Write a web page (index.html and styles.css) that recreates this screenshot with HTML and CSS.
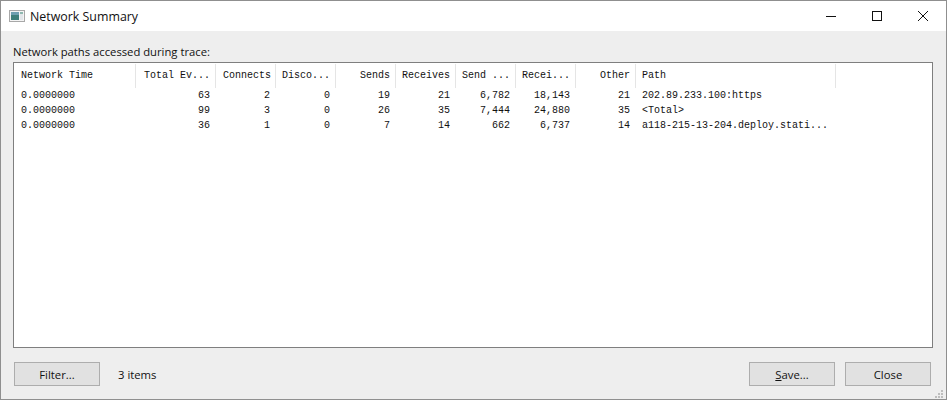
FILE: index.html
```html
<!DOCTYPE html>
<html lang="en">
<head>
<meta charset="utf-8">
<title>Network Summary</title>
<link rel="stylesheet" href="styles.css">
</head>
<body>
<div class="window">
  <header class="titlebar">
    <svg class="app-icon" width="16" height="12" viewBox="0 0 16 12">
      <rect x="0.5" y="0.5" width="15" height="11" fill="#f4f4f4" stroke="#a8a8a8"/>
      <rect x="2" y="2" width="8" height="8" fill="#3f7f7a"/>
      <rect x="2" y="2" width="8" height="3" fill="#6f9fb0"/>
      <rect x="11" y="2" width="3" height="2" fill="#8fb8b0"/>
      <rect x="11" y="4" width="3" height="6" fill="#e2e6ea"/>
    </svg>
    <span class="title">Network Summary</span>
    <div class="controls">
      <svg class="ctl" width="46" height="30" viewBox="0 0 46 30"><path d="M18 15.5h10" stroke="#111" fill="none"/></svg>
      <svg class="ctl" width="46" height="30" viewBox="0 0 46 30"><rect x="18.5" y="10.5" width="9" height="9" stroke="#111" fill="none"/></svg>
      <svg class="ctl" width="46" height="30" viewBox="0 0 46 30"><path d="M18 10l10 10M28 10l-10 10" stroke="#111" fill="none"/></svg>
    </div>
  </header>
  <main class="body">
    <div class="caption">Network paths accessed during trace:</div>
    <div class="list">
      <div class="row head">
        <span class="c0">Network Time</span><span class="c1 r">Total Ev...</span><span class="c2 r">Connects</span><span class="c3 l">Disco...</span><span class="c2 r">Sends</span><span class="c2 l">Receives</span><span class="c2 l">Send ...</span><span class="c2 l">Recei...</span><span class="c4 r">Other</span><span class="c5">Path</span>
      </div>
      <div class="rows">
        <div class="row">
          <span class="c0">0.0000000</span><span class="c1 r">63</span><span class="c2 r">2</span><span class="c3 r">0</span><span class="c2 r">19</span><span class="c2 r">21</span><span class="c2 r">6,782</span><span class="c2 r">18,143</span><span class="c4 r">21</span><span class="c5">202.89.233.100:https</span>
        </div>
        <div class="row">
          <span class="c0">0.0000000</span><span class="c1 r">99</span><span class="c2 r">3</span><span class="c3 r">0</span><span class="c2 r">26</span><span class="c2 r">35</span><span class="c2 r">7,444</span><span class="c2 r">24,880</span><span class="c4 r">35</span><span class="c5">&lt;Total&gt;</span>
        </div>
        <div class="row">
          <span class="c0">0.0000000</span><span class="c1 r">36</span><span class="c2 r">1</span><span class="c3 r">0</span><span class="c2 r">7</span><span class="c2 r">14</span><span class="c2 r">662</span><span class="c2 r">6,737</span><span class="c4 r">14</span><span class="c5">a118-215-13-204.deploy.stati...</span>
        </div>
      </div>
    </div>
    <footer class="actions">
      <button class="btn" type="button">Filter...</button>
      <span class="count">3 items</span>
      <button class="btn push" type="button"><span class="ul">S</span>ave...</button>
      <button class="btn" type="button">Close</button>
    </footer>
  </main>
  <svg class="grip" width="8" height="8" viewBox="0 0 8 8">
    <path d="M6 0h2v2H6zM3 3h2v2H3zM6 3h2v2H6zM0 6h2v2H0zM3 6h2v2H3zM6 6h2v2H6z" fill="#bdbdbd"/>
  </svg>
</div>
</body>
</html>
```
FILE: styles.css
```css
html, body { margin: 0; padding: 0; background: #fff; }
body { width: 947px; height: 401px; overflow: hidden; font-family: "Open Sans", sans-serif; font-size: 11.3px; color: #111; }
.window { position: relative; box-sizing: border-box; width: 947px; height: 400px; border: 1px solid #8f8f8f; background: #eeeeee; display: flex; flex-direction: column; }
.titlebar { height: 30px; background: #fff; display: flex; align-items: center; padding-left: 8px; flex: none; }
.app-icon { flex: none; }
.title { margin-left: 5px; font-size: 12.4px; color: #111; }
.controls { margin-left: auto; display: flex; }
.ctl { display: block; }
.body { flex: 1; display: flex; flex-direction: column; padding: 13px 13px 0 12px; min-height: 0; }
.caption { height: 18px; line-height: 16px; font-size: 11.25px; }
.list { height: 286px; box-sizing: border-box; border: 1px solid #7f7f7f; background: #fff; padding-top: 1px; font-family: "Liberation Mono", monospace; font-size: 10px; color: #111; flex: none; }
.row { display: flex; height: 15px; line-height: 15px; white-space: pre; }
.head { height: 24px; line-height: 24px; }
.head span { height: 24px; border-right: 1px solid #e5e5e5; box-sizing: border-box; }
.row span { padding: 0 6px 0 7px; box-sizing: border-box; flex: none; overflow: hidden; }
.head .r { padding-right: 5px; }
.row .l { padding-left: 6px; }
.r { text-align: right; }
.c0 { width: 122px; }
.c1 { width: 80px; }
.c2 { width: 60px; }
.c3 { width: 60px; }
.c4 { width: 60px; }
.c5 { width: 200px; }
.row .c5 { padding-left: 6px; }
.actions { display: flex; align-items: center; padding: 14px 2px 0 1px; }
.btn { width: 86px; height: 24px; background: #e1e1e1; border: 1px solid #adadad; font: inherit; color: #111; padding: 0; margin: 0; }
.count { margin-left: 18px; }
.push { margin-left: auto; margin-right: 10px; }
.ul { text-decoration: underline; }
.grip { position: absolute; right: 3px; bottom: 1px; }
```
